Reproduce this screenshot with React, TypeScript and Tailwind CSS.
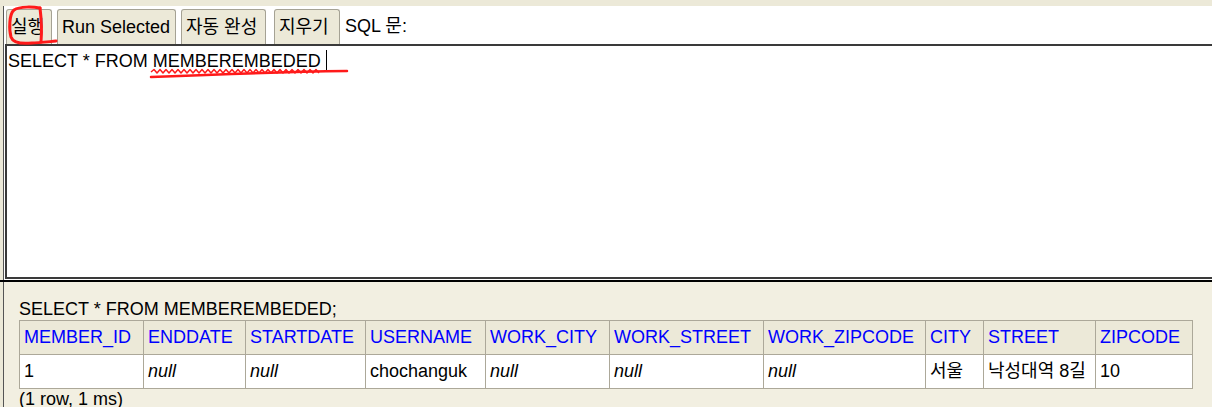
import React from 'react';

const headers = [
  'MEMBER_ID',
  'ENDDATE',
  'STARTDATE',
  'USERNAME',
  'WORK_CITY',
  'WORK_STREET',
  'WORK_ZIPCODE',
  'CITY',
  'STREET',
  'ZIPCODE',
];

const colWidths = [124, 102, 120, 120, 124, 154, 162, 58, 112, 97];

const row: { v: string; nil?: boolean }[] = [
  { v: '1' },
  { v: 'null', nil: true },
  { v: 'null', nil: true },
  { v: 'chochanguk' },
  { v: 'null', nil: true },
  { v: 'null', nil: true },
  { v: 'null', nil: true },
  { v: '서울' },
  { v: '낙성대역 8길' },
  { v: '10' },
];

// squiggly spell-check line under the table name
const wave = (() => {
  let d = 'M151 72';
  for (let x = 151, up = true; x < 318; x += 3, up = !up) {
    d += ` L${x + 3} ${up ? 69.5 : 73}`;
  }
  return d;
})();

const ToolButton = ({ label, w }: { label: string; w: string }) => (
  <button
    className={`${w} h-[35px] shrink-0 rounded-t-[3px] border border-b-0 border-[#a5a294] bg-[#ece9d8] px-[4px] text-left text-[18px] leading-[21px] text-black`}
  >
    {label}
  </button>
);

export default function App() {
  return (
    <div
      className="relative h-[407px] w-[1212px] overflow-hidden bg-[#ece9d8] text-[18px] leading-[21px] text-black"
      style={{ fontFamily: '"Liberation Sans", Arial, "Noto Sans CJK KR", sans-serif' }}
    >
      <div className="h-[6px]" />

      {/* query frame */}
      <div className="ml-[3px] flex h-[274px] flex-col border-l border-[#555] bg-white">
        <div className="flex h-[38px] shrink-0 items-end pl-[2px]">
          <ToolButton label="실행" w="w-[46px]" />
          <div className="w-[5px]" />
          <ToolButton label="Run Selected" w="w-[119px]" />
          <div className="w-[5px]" />
          <ToolButton label="자동 완성" w="w-[85px]" />
          <div className="w-[8px]" />
          <ToolButton label="지우기" w="w-[66px]" />
          <span className="mb-[7px] ml-[5px]">SQL 문:</span>
        </div>
        <div className="ml-[1px] h-[235px] w-[1300px] border-2 border-[#3a3a3a] bg-white pl-[1px] pt-[1px]">
          <span className="whitespace-pre">SELECT * FROM MEMBEREMBEDED </span>
          <span className="inline-block h-[20px] w-[1.5px] translate-y-[3px] bg-black" />
        </div>
      </div>
      <div className="h-[2px] bg-black" />

      {/* result frame */}
      <div className="ml-[3px] h-[200px] border-l border-[#555] bg-[#f2efe1] pl-[15px] pt-[17px]">
        <div>SELECT * FROM MEMBEREMBEDED;</div>
        <table className="w-[1173px] table-fixed border-collapse">
          <colgroup>
            {colWidths.map((w, i) => (
              <col key={i} style={{ width: w }} />
            ))}
          </colgroup>
          <thead>
            <tr>
              {headers.map((h) => (
                <th
                  key={h}
                  className="whitespace-nowrap border border-[#aca899] bg-[#ece9d8] py-[6px] pl-[4px] pr-0 text-left font-normal text-[#0000ff]"
                >
                  {h}
                </th>
              ))}
            </tr>
          </thead>
          <tbody>
            <tr>
              {row.map((c, i) => (
                <td
                  key={i}
                  className={`overflow-hidden whitespace-nowrap border border-[#aca899] bg-white py-[6px] pl-[4px] pr-0 ${c.nil ? 'italic' : ''}`}
                >
                  {c.v}
                </td>
              ))}
            </tr>
          </tbody>
        </table>
        <div>(1 row, 1 ms)</div>
      </div>

      {/* red pen marks */}
      <svg className="pointer-events-none absolute left-0 top-0" width="400" height="90" fill="none">
        <path
          d="M40 8 C34 7 20 6 14 10 C9 14 9 30 11 37 C13 43 22 44 32 43 C38 43 46 42 56 41"
          stroke="#ff1a1a"
          strokeWidth="3"
          strokeLinecap="round"
        />
        <path d="M40 8 C41 16 42 30 41 42" stroke="#ff1a1a" strokeWidth="3" strokeLinecap="round" />
        <path d={wave} stroke="#ff1a1a" strokeWidth="1.5" strokeLinejoin="round" />
        <path d="M151 77 C200 75 280 72 347 71" stroke="#ff1a1a" strokeWidth="2.5" strokeLinecap="round" />
      </svg>
    </div>
  );
}
